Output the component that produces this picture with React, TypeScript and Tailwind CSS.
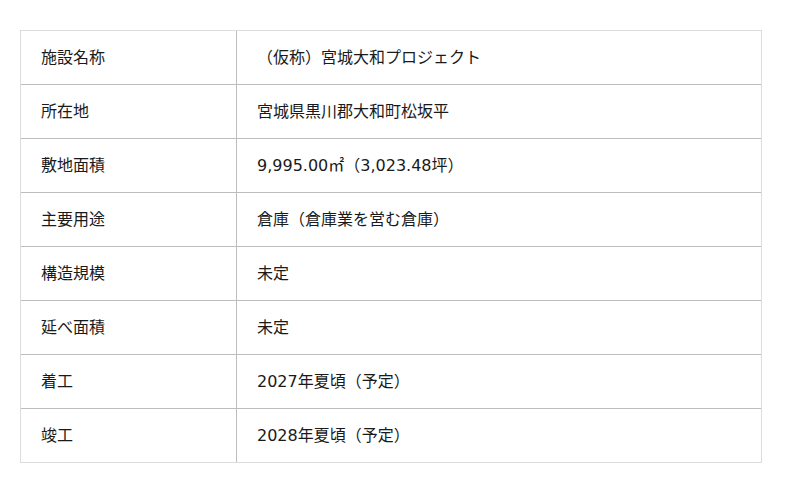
import React from "react";

const rows: [string, string][] = [
  ["施設名称", "（仮称）宮城大和プロジェクト"],
  ["所在地", "宮城県黒川郡大和町松坂平"],
  ["敷地面積", "9,995.00㎡（3,023.48坪）"],
  ["主要用途", "倉庫（倉庫業を営む倉庫）"],
  ["構造規模", "未定"],
  ["延べ面積", "未定"],
  ["着工", "2027年夏頃（予定）"],
  ["竣工", "2028年夏頃（予定）"],
];

export default function App() {
  return (
    <div
      className="w-[800px] h-[493px] bg-white pt-[30px] pl-[20px]"
      style={{ fontFamily: '"DejaVu Sans", "Noto Sans CJK JP", sans-serif' }}
    >
      <div className="w-[742px] border border-[#dcdcdc] text-[#1a1a1a] text-[16px]">
        {rows.map(([k, v], i) => (
          <div
            key={k}
            className={
              i === 0
                ? "flex h-[53px]"
                : "flex h-[54px] border-t border-[#bdbdbd]"
            }
          >
            <div className="w-[216px] shrink-0 border-r border-[#bdbdbd] flex items-center pl-[20px]">
              {k}
            </div>
            <div className="flex-1 flex items-center pl-[20px]">{v}</div>
          </div>
        ))}
      </div>
    </div>
  );
}
